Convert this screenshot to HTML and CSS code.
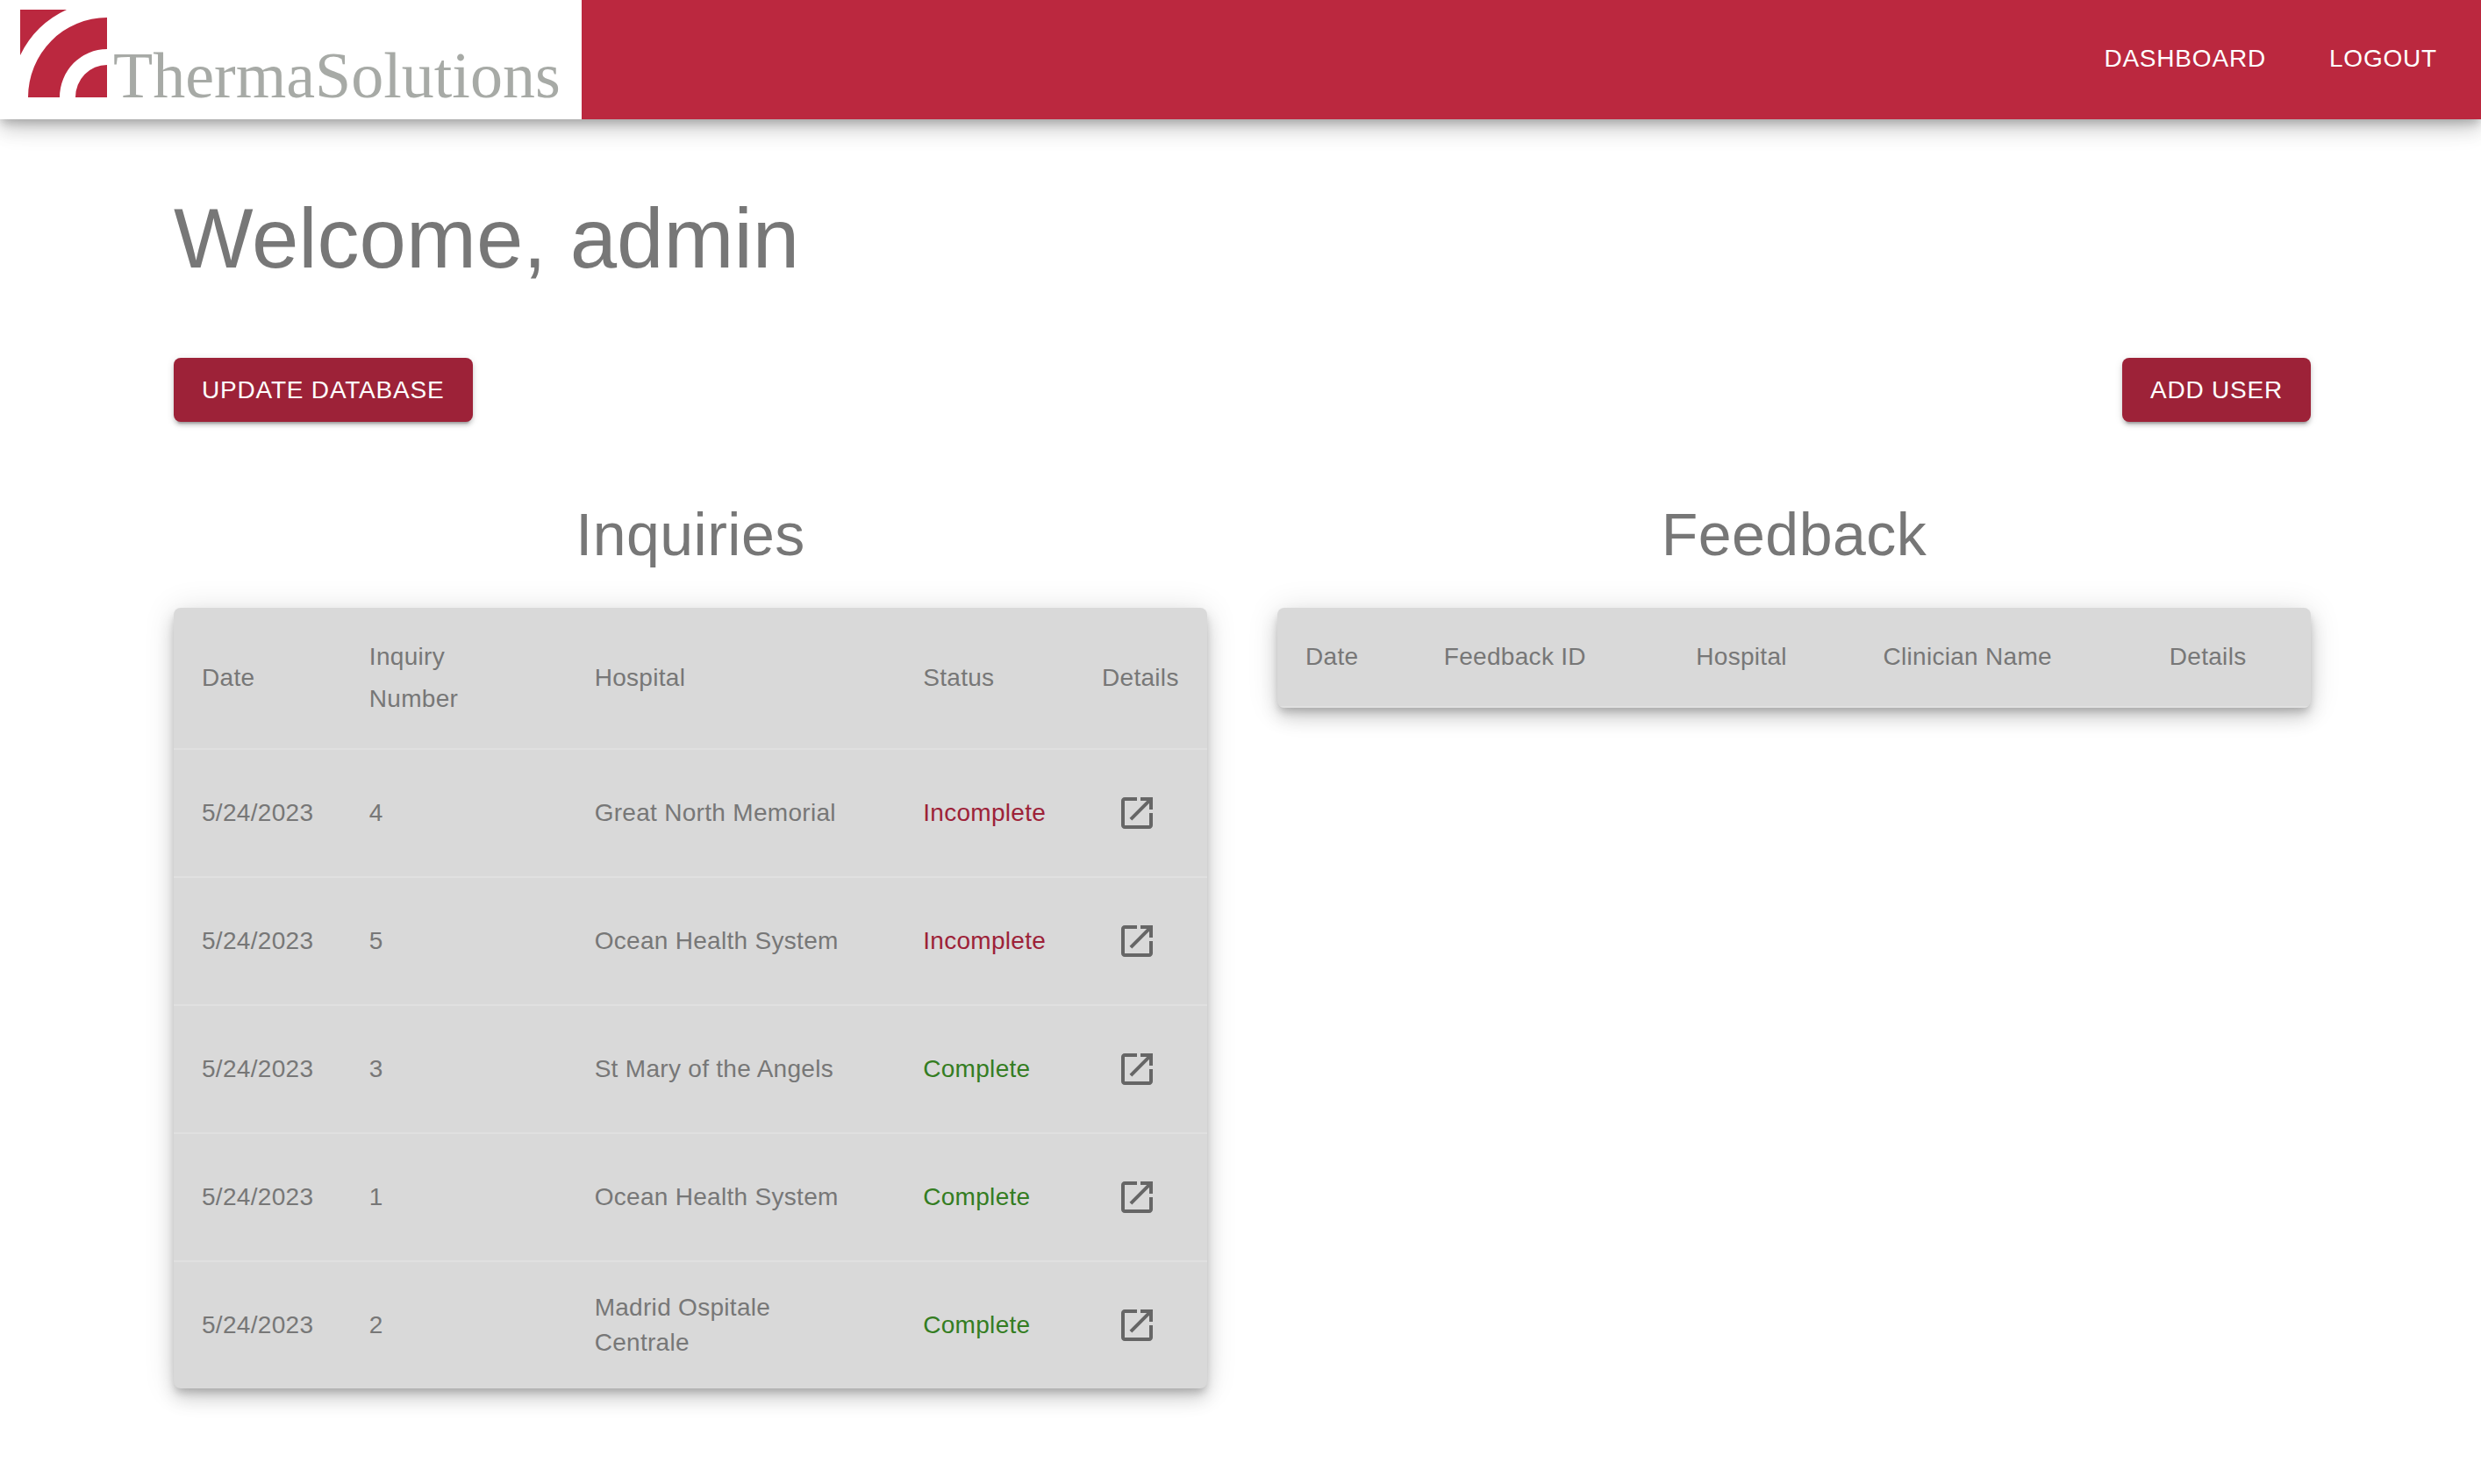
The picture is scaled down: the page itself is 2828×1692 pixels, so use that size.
FILE: index.html
```html
<!DOCTYPE html>
<html lang="en">
<head>
<meta charset="utf-8">
<title>ThermaSolutions - Dashboard</title>
<link rel="stylesheet" href="styles.css">
</head>
<body>
<svg class="sprite" aria-hidden="true">
  <symbol id="open" viewBox="0 0 24 24"><path d="M19 19H5V5h7V3H5c-1.11 0-2 .9-2 2v14c0 1.1.89 2 2 2h14c1.1 0 2-.9 2-2v-7h-2v7zM14 3v2h3.59l-9.83 9.83 1.41 1.41L19 6.41V10h2V3h-7z"/></symbol>
</svg>
<header class="app-bar">
  <a class="logo" href="#">
    <svg class="logo-mark" viewBox="0 0 99 100" aria-hidden="true">
      <path d="M0 0H53A110 110 0 0 0 0 52ZM9 100A90 91 0 0 1 99 9V45A54 55 0 0 0 45 100ZM63 100A36 37 0 0 1 99 63V100Z"/>
    </svg>
    <span class="logo-text">ThermaSolutions</span>
  </a>
  <nav class="nav">
    <a href="#">DASHBOARD</a>
    <a href="#">LOGOUT</a>
  </nav>
</header>
<main class="page">
  <h1>Welcome, admin</h1>
  <div class="actions">
    <button class="btn" type="button">UPDATE DATABASE</button>
    <button class="btn" type="button">ADD USER</button>
  </div>
  <div class="panels">
    <section>
      <h2>Inquiries</h2>
      <div class="card">
        <table class="inquiries">
          <thead>
            <tr><th>Date</th><th>Inquiry Number</th><th>Hospital</th><th>Status</th><th>Details</th></tr>
          </thead>
          <tbody>
            <tr><td>5/24/2023</td><td>4</td><td>Great North Memorial</td><td class="incomplete">Incomplete</td><td><button class="icon-btn" type="button" aria-label="Open inquiry 4"><svg><use href="#open"/></svg></button></td></tr>
            <tr><td>5/24/2023</td><td>5</td><td>Ocean Health System</td><td class="incomplete">Incomplete</td><td><button class="icon-btn" type="button" aria-label="Open inquiry 5"><svg><use href="#open"/></svg></button></td></tr>
            <tr><td>5/24/2023</td><td>3</td><td>St Mary of the Angels</td><td class="complete">Complete</td><td><button class="icon-btn" type="button" aria-label="Open inquiry 3"><svg><use href="#open"/></svg></button></td></tr>
            <tr><td>5/24/2023</td><td>1</td><td>Ocean Health System</td><td class="complete">Complete</td><td><button class="icon-btn" type="button" aria-label="Open inquiry 1"><svg><use href="#open"/></svg></button></td></tr>
            <tr><td>5/24/2023</td><td>2</td><td>Madrid Ospitale Centrale</td><td class="complete">Complete</td><td><button class="icon-btn" type="button" aria-label="Open inquiry 2"><svg><use href="#open"/></svg></button></td></tr>
          </tbody>
        </table>
      </div>
    </section>
    <section>
      <h2>Feedback</h2>
      <div class="card">
        <table class="feedback">
          <thead>
            <tr><th>Date</th><th>Feedback ID</th><th>Hospital</th><th>Clinician Name</th><th>Details</th></tr>
          </thead>
        </table>
      </div>
    </section>
  </div>
</main>
</body>
</html>
```
FILE: styles.css
```css
* { box-sizing: border-box; }

body {
  margin: 0;
  background: #fff;
  color: #777;
  font-family: "Liberation Sans", Arial, sans-serif;
  font-size: 28px;
  line-height: 40px;
}

.sprite { display: none; }

a { color: inherit; text-decoration: none; }

.app-bar {
  display: flex;
  justify-content: space-between;
  min-height: 136px;
  background: #bb283f;
  box-shadow: 0 6px 10px -2px rgba(0, 0, 0, .2), 0 12px 20px rgba(0, 0, 0, .14), 0 2px 36px rgba(0, 0, 0, .12);
}

.logo {
  display: flex;
  align-items: baseline;
  gap: 7px;
  padding: 11px 24px 0 23px;
  background: #fff;
}

.logo-mark { width: 99px; height: 100px; fill: #bb283f; }

.logo-text {
  color: #a7aaa6;
  font-family: "Liberation Serif", "Times New Roman", serif;
  font-size: 74px;
  line-height: 80px;
}

.nav {
  display: flex;
  align-items: center;
  gap: 72px;
  padding: 0 50px 2px 0;
  color: #fff;
  letter-spacing: 0.02857em;
}

.page { padding: 80px 194px 80px 198px; }

h1, h2 { margin: 0; font-weight: 400; }

h1 { font-size: 96px; line-height: 112px; }

h2 {
  margin-bottom: 42px;
  font-size: 68px;
  line-height: 84px;
  letter-spacing: 0.00735em;
  text-align: center;
}

.actions {
  display: flex;
  justify-content: space-between;
  margin: 80px 0 86px;
}

.btn {
  padding: 12px 32px;
  border: 0;
  border-radius: 8px;
  background: #9d2238;
  color: #fff;
  font: inherit;
  line-height: 49px;
  letter-spacing: 0.02857em;
  box-shadow: 0 6px 2px -4px rgba(0, 0, 0, .2), 0 4px 4px rgba(0, 0, 0, .14), 0 2px 10px rgba(0, 0, 0, .12);
}

.panels {
  display: grid;
  grid-template-columns: 1fr 1fr;
  align-items: start;
  gap: 80px;
}

.card {
  overflow: hidden;
  border-radius: 8px;
  background: #d9d9d9;
  box-shadow: 0 6px 10px -2px rgba(0, 0, 0, .2), 0 12px 20px rgba(0, 0, 0, .14), 0 2px 36px rgba(0, 0, 0, .12);
}

table {
  width: 100%;
  table-layout: fixed;
  border-collapse: separate;
  border-spacing: 0;
  letter-spacing: 0.01071em;
}

th, td {
  padding: 32px;
  border-bottom: 2px solid #e0e0e0;
  font-weight: 400;
  text-align: left;
  vertical-align: middle;
}

th { line-height: 48px; }

tbody tr:last-child td { border-bottom: 0; }

.inquiries th:nth-child(1) { width: 16.2%; }
.inquiries th:nth-child(2) { width: 21.8%; }
.inquiries th:nth-child(3) { width: 31.8%; }
.inquiries th:nth-child(4) { width: 17.3%; }
.inquiries th:nth-child(5) { width: 12.9%; }

.feedback th:nth-child(1) { width: 13.4%; }
.feedback th:nth-child(2) { width: 24.4%; }
.feedback th:nth-child(3) { width: 18.1%; }
.feedback th:nth-child(4) { width: 27.7%; }
.feedback th:nth-child(5) { width: 16.4%; }

.incomplete { color: #9d2238; }
.complete { color: #347d22; }

.icon-btn {
  display: block;
  padding: 16px;
  border: 0;
  background: none;
  color: #666;
}

.icon-btn svg { display: block; width: 48px; height: 48px; fill: currentColor; }
```
